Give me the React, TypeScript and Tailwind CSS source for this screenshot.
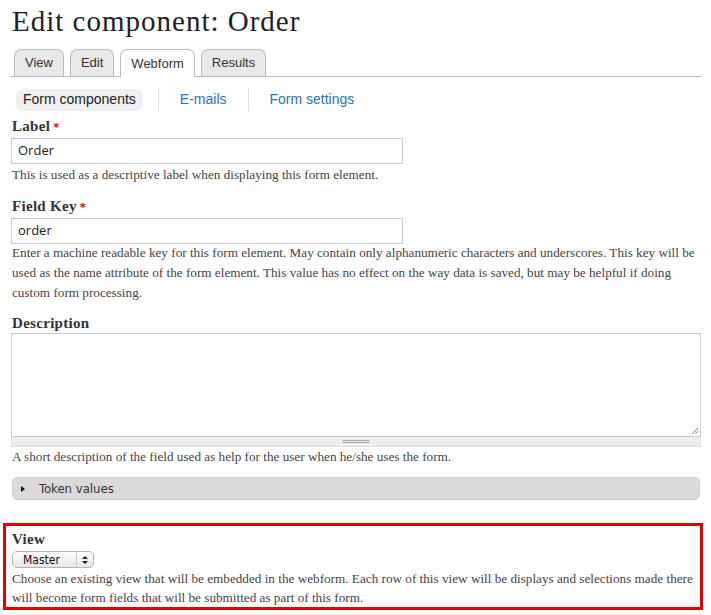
import React from 'react';

const serif = 'font-["Liberation_Serif",Georgia,serif]';

const Tab: React.FC<{ label: string; active?: boolean }> = ({ label, active }) => (
  <div
    className={
      'px-[10px] flex items-center rounded-t-[7px] border border-[#bbb] text-[13px] text-[#333] ' +
      (active ? 'bg-white border-b-0 -mb-px h-[28px]' : 'bg-[#e8e8e8] border-b-0 h-[27px]')
    }
  >
    {label}
  </div>
);

const Label: React.FC<{ text: string; required?: boolean }> = ({ text, required }) => (
  <div className={`${serif} text-[15px] tracking-[0.3px] font-bold text-[#333] leading-[18px]`}>
    {text}
    {required && <span className="text-[#d00] ml-[3px] text-[12px]">*</span>}
  </div>
);

const Help: React.FC<{ children: React.ReactNode; tight?: boolean }> = ({ children, tight }) => (
  <div className={`${serif} text-[13.2px] text-[#444] ${tight ? 'leading-[19px]' : 'leading-[20px]'}`}>{children}</div>
);

const TextInput: React.FC<{ value: string }> = ({ value }) => (
  <div className="w-[392px] h-[26px] border border-[#ccc] bg-white flex items-center px-[6px] text-[13px] text-[#222] font-['Open_Sans',sans-serif]">
    {value}
  </div>
);

const App: React.FC = () => {
  return (
    <div className="w-[711px] h-[615px] bg-white text-[#333] font-['Liberation_Sans',Arial,sans-serif] overflow-hidden">
      <h1 className={`${serif} text-[29px] tracking-[1px] leading-[34px] text-[#222] pl-[12px] pt-[4px]`}>Edit component: Order</h1>

      <div className="mx-[10px] mt-[11px] flex items-end gap-[6px] pl-[4px] border-b border-[#bbb] h-[28px]">
        <Tab label="View" />
        <Tab label="Edit" />
        <Tab label="Webform" active />
        <Tab label="Results" />
      </div>

      <div className="flex items-center pl-[16px] mt-[11px] text-[14px] h-[23px]">
        <div className="bg-[#f0f0f0] rounded-[7px] h-[22px] px-[7px] flex items-center text-[#222]">Form components</div>
        <div className="w-px h-[23px] bg-[#ddd] mx-[15px]" />
        <div className="text-[#2a72b5] px-[6px]">E-mails</div>
        <div className="w-px h-[23px] bg-[#ddd] mx-[15px]" />
        <div className="text-[#2a72b5] px-[6px]">Form settings</div>
      </div>

      <div className="px-[11px] mt-[6px]">
        <div className="flex flex-col">
          <div className="pl-px"><Label text="Label" required /></div>
          <div className="mt-[2px]"><TextInput value="Order" /></div>
          <div className="pl-px mt-[1px]"><Help>This is used as a descriptive label when displaying this form element.</Help></div>
        </div>

        <div className="flex flex-col mt-[12px]">
          <div className="pl-px"><Label text="Field Key" required /></div>
          <div className="mt-[2px]"><TextInput value="order" /></div>
          <div className="pl-px mt-[-1px]">
            <Help>
              Enter a machine readable key for this form element. May contain only alphanumeric characters and underscores. This key will be used as the name attribute of the form element. This value has no effect on the way data is saved, but may be helpful if doing custom form processing.
            </Help>
          </div>
        </div>

        <div className="flex flex-col mt-[11px]">
          <div className="pl-px"><Label text="Description" /></div>
          <div className="mt-[1px] w-[690px]">
            <div className="h-[104px] border border-[#ccc] bg-white relative">
              <svg className="absolute right-[1px] bottom-[1px]" width="8" height="8" viewBox="0 0 8 8">
                <path d="M7 1 L1 7 M7 4 L4 7" stroke="#888" strokeWidth="1" />
              </svg>
            </div>
            <div className="h-[10px] bg-[#eee] border border-t-0 border-[#ddd] flex items-center justify-center">
              <div className="w-[28px] h-[3px] border-t border-b border-[#aaa]" />
            </div>
          </div>
          <div className="pl-px"><Help>A short description of the field used as help for the user when he/she uses the form.</Help></div>
        </div>

        <div className="ml-px mt-[10px] w-[688px] h-[23px] bg-[#dadada] rounded-[5px] border border-[#d0d0d0] flex items-center pl-[7px]">
          <svg width="6" height="8" viewBox="0 0 6 8"><path d="M1 1 L5 4 L1 7 Z" fill="#111" /></svg>
          <span className="ml-[13px] text-[13px] text-[#333] font-['DejaVu_Sans_Condensed','DejaVu_Sans',sans-serif]">Token values</span>
        </div>
      </div>

      <div className="mx-[3px] mt-[23px] w-[700px] border-[3px] border-[#e30000] pl-[6px] pt-[4px]">
        <Label text="View" />
        <div className="mt-[3px] w-[82px] h-[17px] rounded-[5px] border border-[#b5b5b5] bg-gradient-to-b from-white to-[#e6e6e6] flex items-center text-[12px] text-[#111] font-['DejaVu_Sans_Condensed','DejaVu_Sans',sans-serif]">
          <span className="pl-[10px] flex-1">Master</span>
          <div className="w-px h-full bg-[#c8c8c8]" />
          <svg className="mx-[5px]" width="6" height="10" viewBox="0 0 6 10">
            <path d="M0 4 L3 1 L6 4 Z M0 6 L3 9 L6 6 Z" fill="#222" />
          </svg>
        </div>
        <div className="mt-[1px]">
          <Help tight>
            Choose an existing view that will be embedded in the webform. Each row of this view will be displays and selections made there will become form fields that will be submitted as part of this form.
          </Help>
        </div>
      </div>
    </div>
  );
};

export default App;
